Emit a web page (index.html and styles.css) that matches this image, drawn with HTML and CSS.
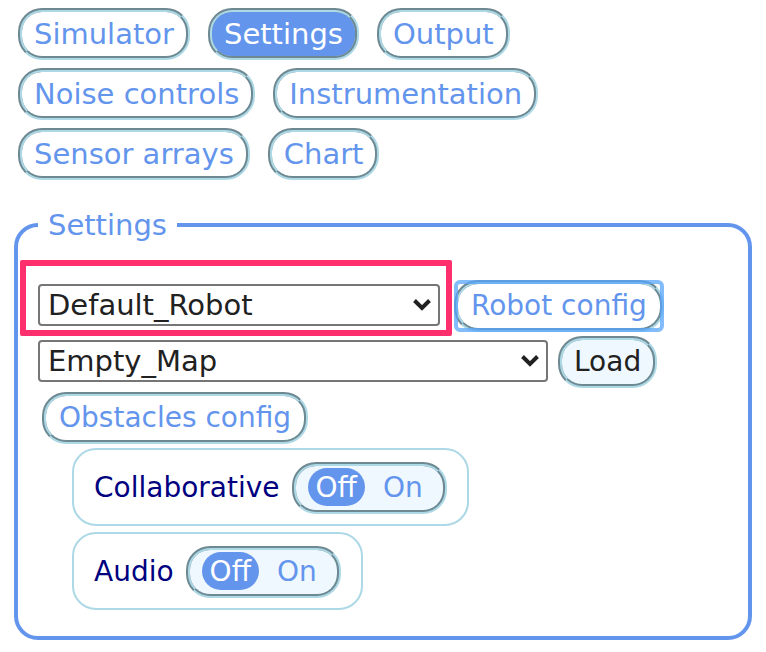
FILE: index.html
```html
<!DOCTYPE html>
<html lang="en">
<head>
<meta charset="utf-8">
<title>Settings</title>
<link rel="stylesheet" href="styles.css">
</head>
<body>
<nav class="tabs">
  <button class="pill" type="button">Simulator</button>
  <button class="pill active" type="button" aria-pressed="true">Settings</button>
  <button class="pill" type="button">Output</button>
  <button class="pill" type="button">Noise controls</button>
  <button class="pill" type="button">Instrumentation</button>
  <button class="pill" type="button">Sensor arrays</button>
  <button class="pill" type="button">Chart</button>
</nav>
<fieldset class="panel">
  <legend>Settings</legend>
  <div class="rows">
    <div class="row">
      <div class="picker robot highlighted">
        <select aria-label="Robot"><option>Default_Robot</option></select>
        <svg class="chevron" viewBox="0 0 18 12" aria-hidden="true"><path d="M1.5 1.5 9 9 16.5 1.5"/></svg>
      </div>
      <button class="pill config focused" type="button">Robot config</button>
    </div>
    <div class="row">
      <div class="picker map">
        <select aria-label="Map"><option>Empty_Map</option></select>
        <svg class="chevron" viewBox="0 0 18 12" aria-hidden="true"><path d="M1.5 1.5 9 9 16.5 1.5"/></svg>
      </div>
      <button class="pill load" type="button">Load</button>
    </div>
    <div class="row inset">
      <button class="pill config" type="button">Obstacles config</button>
    </div>
    <div class="options">
      <div class="option">
        <label for="collaborative">Collaborative</label>
        <button class="pill toggle" id="collaborative" type="button" role="switch" aria-checked="false"><span class="state current">Off</span><span class="state">On</span></button>
      </div>
      <div class="option">
        <label for="audio">Audio</label>
        <button class="pill toggle" id="audio" type="button" role="switch" aria-checked="false"><span class="state current">Off</span><span class="state">On</span></button>
      </div>
    </div>
  </div>
</fieldset>
</body>
</html>
```
FILE: styles.css
```css
* {
  box-sizing: border-box;
}

body {
  margin: 0;
  padding: 8px 14px 12px;
  background: #fff;
  color: #212121;
  font-family: Verdana, "DejaVu Sans", sans-serif;
  font-size: 28px;
  line-height: 34px;
}

.tabs {
  display: flex;
  flex-wrap: wrap;
  gap: 8px 18px;
  max-width: 560px;
  padding-left: 4px;
  font-size: 29px;
}

.pill {
  position: relative;
  padding: 5px 12px;
  border: 4px groove lightblue;
  border-radius: 24px;
  background: #fff;
  color: cornflowerblue;
  font: inherit;
  white-space: nowrap;
}

.pill.active {
  background: cornflowerblue;
  color: #fff;
}

.pill.config {
  padding: 5px 13px;
}

.pill.load {
  background: aliceblue;
  color: #212121;
}

.pill.focused::after {
  content: "";
  position: absolute;
  inset: -4px;
  border: 4px solid rgba(88, 166, 250, 0.75);
  border-radius: 6px;
}

.panel {
  min-width: 0;
  margin: 28px 0 0;
  padding: 38px 20px 26px;
  border: 4px solid cornflowerblue;
  border-radius: 24px;
}

.panel legend {
  padding: 0 10px;
  color: cornflowerblue;
  font-size: 29px;
}

.rows {
  display: flex;
  flex-direction: column;
  gap: 4px;
}

.row {
  display: flex;
  align-items: center;
}

.row.inset {
  padding-left: 4px;
}

.picker {
  position: relative;
  display: flex;
  align-items: center;
  margin-bottom: 2px;
  font-size: 29px;
}

.picker.robot {
  width: 402px;
  margin-right: 14px;
}

.picker.map {
  width: 510px;
  margin-right: 10px;
}

.picker select {
  appearance: none;
  width: 100%;
  height: 42px;
  padding: 0 32px 0 8px;
  border: 2px solid #767676;
  border-radius: 4px;
  background: #fff;
  color: #212121;
  font: inherit;
}

.chevron {
  position: absolute;
  right: 9px;
  width: 18px;
  height: 12px;
  fill: none;
  stroke: #212121;
  stroke-width: 4;
  pointer-events: none;
}

.highlighted::after {
  content: "";
  position: absolute;
  inset: -24px -12px -10px -18px;
  border: 6px solid #ff2e6c;
  border-radius: 2px;
  pointer-events: none;
}

.options {
  display: flex;
  flex-direction: column;
  align-items: flex-start;
  gap: 6px;
  padding-left: 34px;
}

.option {
  display: flex;
  align-items: center;
  gap: 12px;
  padding: 12px 20px 10px;
  border: 2px solid lightblue;
  border-radius: 24px;
  color: navy;
}

.toggle {
  display: flex;
  gap: 10px;
  padding: 2px 12px 4px;
  background: aliceblue;
}

.state {
  padding: 3px 8px 1px;
  border-radius: 20px;
}

.state.current {
  background: cornflowerblue;
  color: #fff;
}
```
